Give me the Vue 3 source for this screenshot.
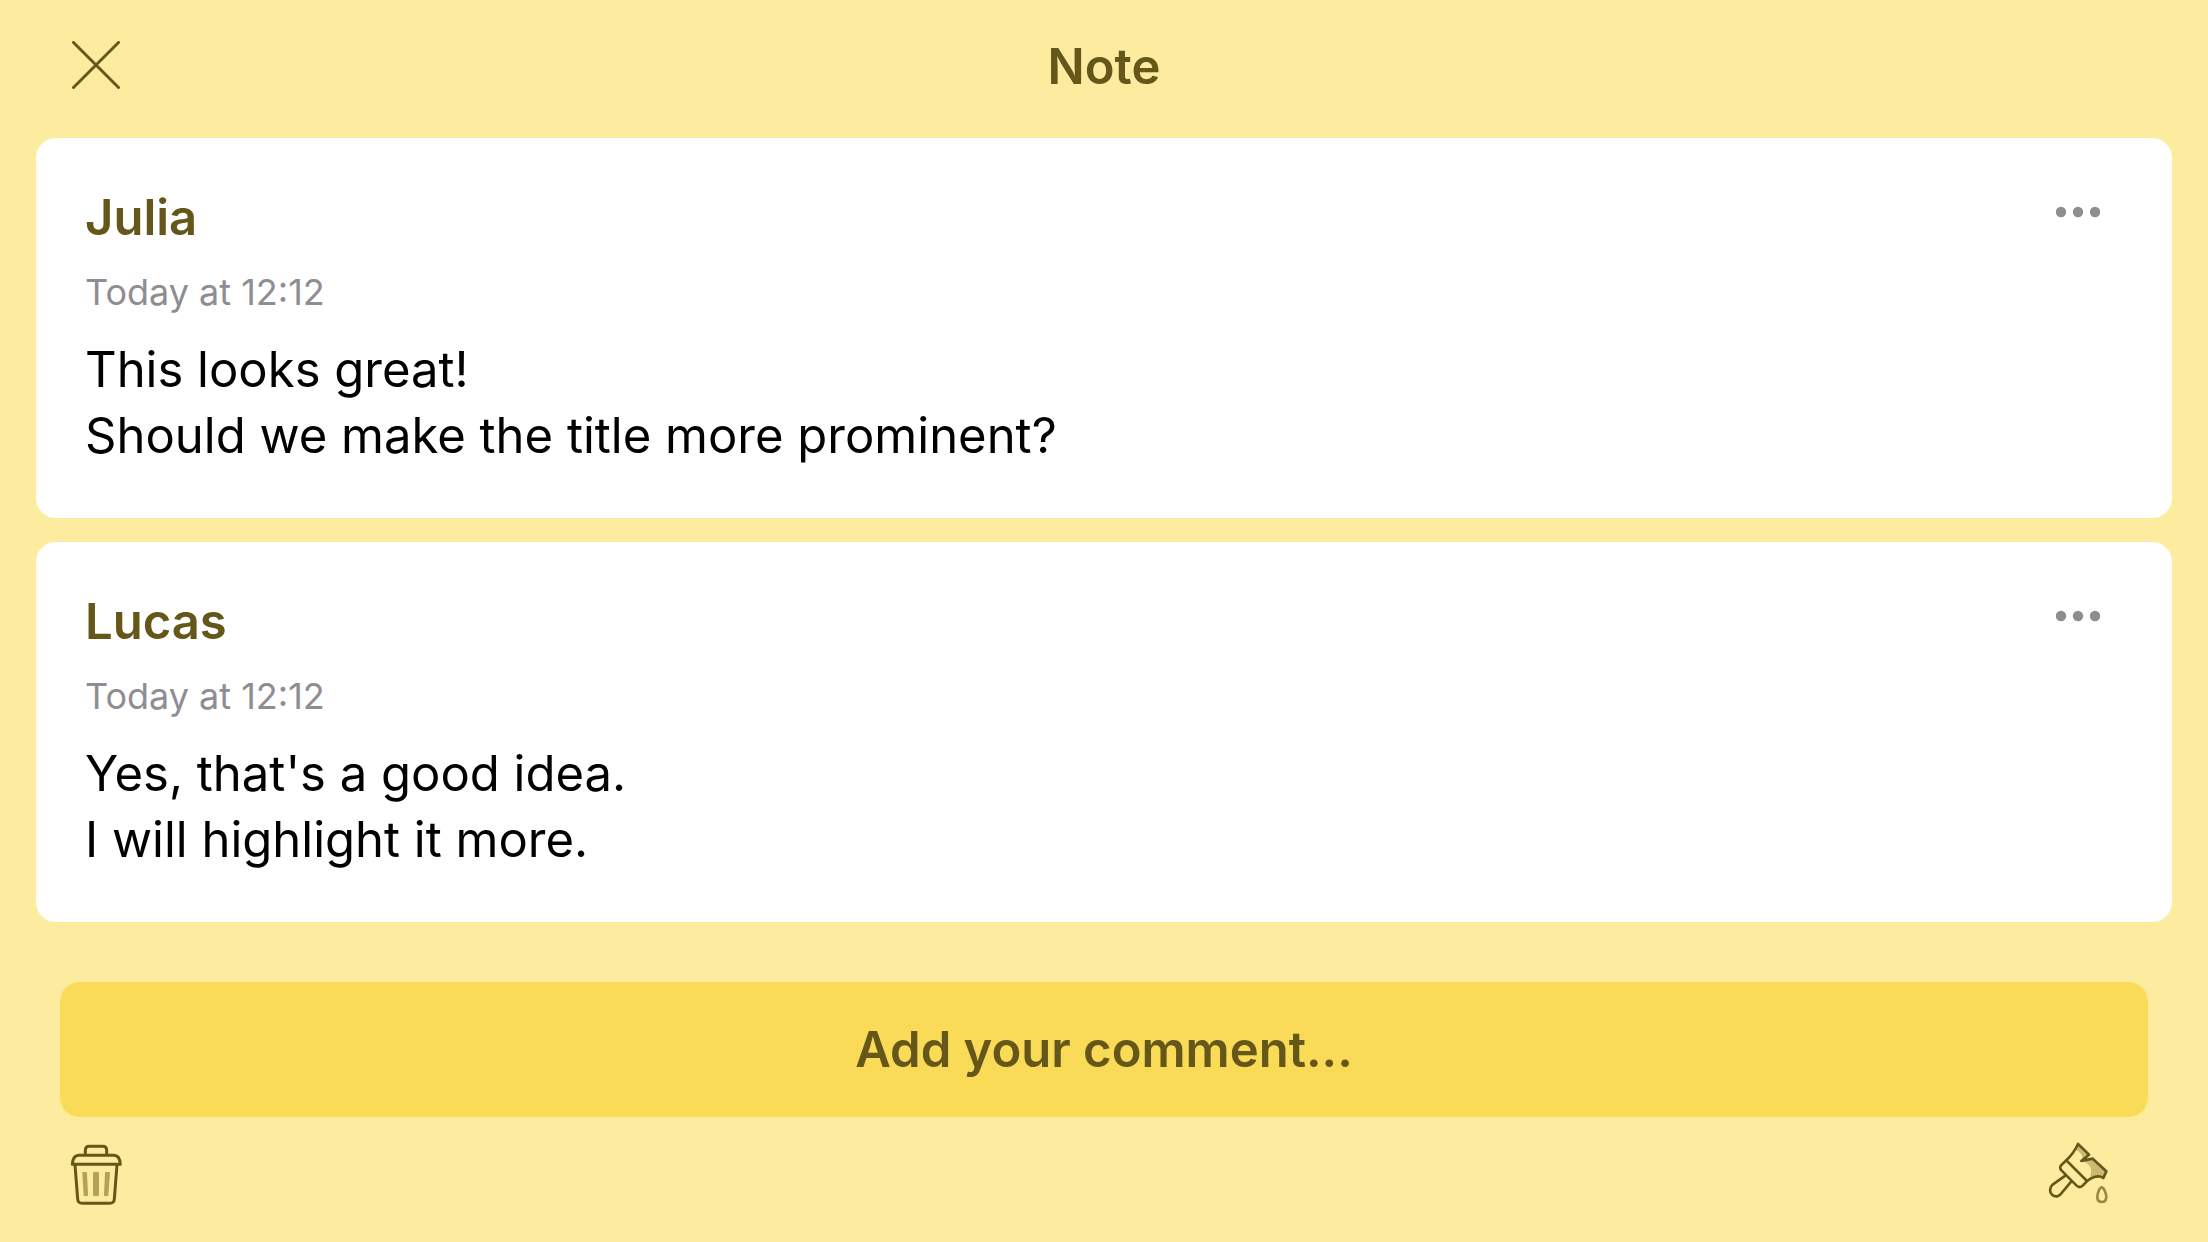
<script setup>
const comments = [
  {
    author: 'Julia',
    date: 'Today at 12:12',
    lines: ['This looks great!', 'Should we make the title more prominent?'],
  },
  {
    author: 'Lucas',
    date: 'Today at 12:12',
    lines: ["Yes, that's a good idea.", 'I will highlight it more.'],
  },
]
</script>

<template>
  <div class="note">
    <header class="header">
      <button class="icon-button close" type="button" aria-label="Close">
        <svg width="48" height="48" viewBox="0 0 48 48" fill="none" stroke="currentColor" stroke-width="3" stroke-linecap="round">
          <path d="M1.5 1.5 46.5 46.5M46.5 1.5 1.5 46.5" />
        </svg>
      </button>
      <h1 class="title">Note</h1>
    </header>

    <main class="body">
      <article v-for="comment in comments" :key="comment.author" class="card">
        <div class="card-head">
          <h2 class="author">{{ comment.author }}</h2>
          <button class="icon-button more" type="button" aria-label="More options">
            <svg width="44" height="12" viewBox="0 0 44 12" fill="currentColor">
              <circle cx="5" cy="6" r="5.2" />
              <circle cx="22" cy="6" r="5.2" />
              <circle cx="39" cy="6" r="5.2" />
            </svg>
          </button>
        </div>
        <time class="date">{{ comment.date }}</time>
        <p v-for="line in comment.lines" :key="line" class="line">{{ line }}</p>
      </article>
      <button class="add" type="button">Add your comment...</button>
    </main>

    <footer class="footer">
      <button class="icon-button" type="button" aria-label="Delete note">
        <svg width="60" height="66" viewBox="48 66 180 198" fill="none" stroke="currentColor" stroke-width="9" stroke-linejoin="round">
          <path d="M106 106V91Q106 79 118 79H158Q170 79 170 91V106" />
          <path d="M67 133H211Q209 106 192 106H86Q69 106 67 133Z" />
          <path d="M75 134 83 237Q84 250 97 250H179Q192 250 193 237L201 134" />
          <path class="soft" stroke="none" d="M98 156H109Q111 156 111 159L114 225Q114 228 112 228H103Q101 228 101 225L97 159Q97 156 98 156ZM132 156H145Q147 156 147 159V225Q147 228 145 228H132Q129 228 129 225V159Q129 156 132 156ZM168 156H178Q180 156 180 159L175 225Q175 228 173 228H164Q162 228 162 225L165 159Q165 156 168 156Z" />
        </svg>
      </button>
      <button class="icon-button" type="button" aria-label="Change note color">
        <svg width="72" height="66" viewBox="36 66 216 198" fill="none" stroke="currentColor" stroke-width="8" stroke-linejoin="round" stroke-linecap="round">
          <path class="shade" stroke="none" d="M144 72 177 104 154 123Q166 104 137 89ZM154 123 188 116 229 154 220 174Q202 160 180 171 194 134 154 123Z" />
          <path d="M109 121Q132 99 144 72L177 104 154 123 188 116 229 154 220 174Q201 161 171 183" />
          <path d="M109 121 171 183 159 196Q149 206 139 196L95 152Q86 142 95 134Z" />
          <path d="M107 166 69 193C58 202 58 216 66 224 76 233 88 230 95 219L124 184" />
          <path class="drop" d="M215 202C208 202 202 222 202 232Q202 246 215 246T229 232C229 222 222 202 215 202Z" />
        </svg>
      </button>
    </footer>
  </div>
</template>

<style>
body {
  margin: 0;
  background: #fdeca0;
}
</style>

<style scoped>
.note {
  display: flex;
  flex-direction: column;
  box-sizing: border-box;
  min-height: 100vh;
  background: #fdeca0;
  color: #655619;
  font-family: Inter, "Liberation Sans", sans-serif;
  font-size: 49px;
  line-height: 66px;
}

.icon-button {
  display: flex;
  align-items: center;
  padding: 0;
  border: 0;
  background: none;
  color: inherit;
  cursor: pointer;
}

.header {
  display: grid;
  grid-template-columns: 1fr auto 1fr;
  align-items: start;
  padding: 34px 72px 38px;
}

.close {
  justify-self: start;
  height: 62px;
}

.title,
.author {
  margin: 0;
  font-size: 49px;
  font-weight: 600;
}

.body {
  display: flex;
  flex-direction: column;
  gap: 24px;
  padding: 0 36px;
}

.card {
  padding: 47px 72px 49px 49px;
  border-radius: 20px;
  background: #fff;
}

.card-head {
  display: flex;
  justify-content: space-between;
  align-items: flex-start;
}

.more {
  height: 54px;
  color: #8e8d92;
}

.date {
  display: block;
  margin: 19px 0 23px;
  color: #8e8d92;
  font-size: 36px;
  line-height: 44px;
}

.line {
  margin: 0;
  color: #000;
}

.add {
  margin: 36px 24px 0;
  padding: 35px 24px 34px;
  border: 0;
  border-radius: 20px;
  background: #f9db57;
  color: inherit;
  font: inherit;
  font-weight: 600;
  cursor: pointer;
}

.footer {
  display: flex;
  justify-content: space-between;
  padding: 25px 94px 34px 66px;
}

.soft {
  fill: #b1a25a;
}

.shade {
  fill: #cabb72;
}

.drop {
  stroke: #988a46;
}
</style>
